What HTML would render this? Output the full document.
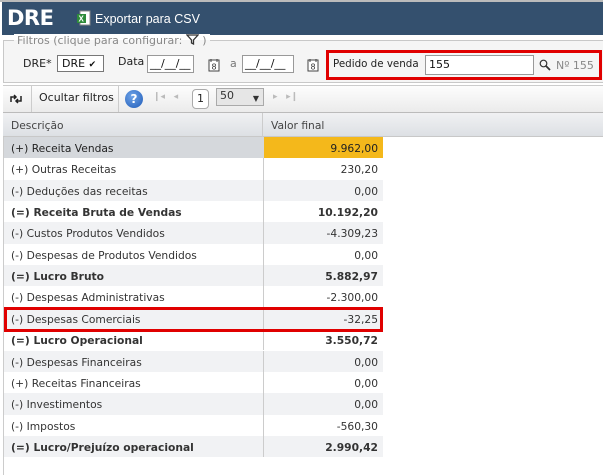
<!DOCTYPE html>
<html><head><meta charset="utf-8"><style>
*{box-sizing:border-box;margin:0;padding:0}
body{width:603px;height:475px;overflow:hidden;background:#fff;font-family:"DejaVu Sans","Liberation Sans",sans-serif;font-size:10.7px;color:#333;position:relative}
.abs{position:absolute}
#top{left:0;top:0;width:603px;height:2px;background:#bbb}
#hdr{left:2px;top:2px;width:601px;height:33px;background:#34506e;color:#fff}
#hdr .t{position:absolute;left:5px;top:4px;font:bold 21px "DejaVu Sans",sans-serif;letter-spacing:-0.5px}
#hdr .e{position:absolute;left:93px;top:10px;font-family:"Liberation Sans",sans-serif;font-size:12.5px}
#fs{left:3px;top:40px;width:600px;height:43px;border:1px solid #c8c8c8;border-right:none;background:#f5f5f5}
.lg{left:14px;top:34px;padding:0 3px;color:#888;font-size:11px;background:linear-gradient(#fff 6px,#f5f5f5 6px)}
.inp{border:1px solid #999;background:#fff;height:18px}
#tb{left:3px;top:85px;width:600px;height:28px;background:linear-gradient(#fdfdfd,#ebebeb);border-top:1px solid #ccc;border-bottom:1px solid #bbb}
#th{left:3px;top:113px;width:600px;height:24px;background:linear-gradient(#f0f1f3,#dde0e4);border-bottom:1px solid #c8c8c8;color:#444}
.row{position:absolute;left:4px;width:379px;height:21.35px;line-height:21px}
.row .d{position:absolute;left:7px;top:1px}
.row .v{position:absolute;right:5px;top:1px;text-align:right}
.row.g{background:#f1f2f4}
.row.b{font-weight:bold}
.row .sep{position:absolute;left:259px;top:0;width:1px;height:100%;background:#ccc}
.red{border:3px solid #e00000}
</style></head><body>
<div id="top" class="abs"></div>
<div id="hdr" class="abs"><span class="t">DRE</span>
<svg style="position:absolute;left:74px;top:8px" width="16" height="17"><rect x="4" y="1" width="10" height="14" fill="#fff" stroke="#888"/><rect x="1" y="4" width="9" height="9" fill="#2e8b3a"/><text x="2.5" y="11.5" font-size="8" fill="#fff" font-family="Liberation Sans" font-weight="bold">X</text></svg>
<span class="e">Exportar para CSV</span></div>
<div id="fs" class="abs"></div>
<div class="abs lg">Filtros (clique para configurar: <svg width="13" height="11" style="vertical-align:-1px"><path d="M1 1h11L7.5 6v4L5.5 9V6z" fill="none" stroke="#333" stroke-width="1.3"/></svg> )</div>
<div class="abs" style="left:23px;top:57px;font-size:11px;color:#222">DRE*</div>
<div class="abs inp" style="left:57px;top:55px;width:47px;height:17px;border-color:#777;font-size:11px;padding-left:4px;line-height:15px;color:#111">DRE <span style="font-size:9px">&#x2714;</span></div>
<div class="abs" style="left:118px;top:55px;font-size:11px;color:#222">Data</div>
<div class="abs inp" style="left:147px;top:55px;width:47px;color:#111;font-size:11px;padding-left:2px;line-height:16px">__/__/__</div>
<svg class="abs" style="left:208px;top:58px" width="12" height="14"><rect x="1" y="2" width="10" height="11" fill="#fff" stroke="#444"/><line x1="3" y1="1" x2="3" y2="4" stroke="#444"/><line x1="9" y1="1" x2="9" y2="4" stroke="#444"/><text x="3.5" y="11.5" font-size="8" fill="#333">8</text></svg>
<div class="abs" style="left:230px;top:57px;font-size:11px;color:#777">a</div>
<div class="abs inp" style="left:242px;top:55px;width:52px;color:#111;font-size:11px;padding-left:2px;line-height:16px">__/__/__</div>
<svg class="abs" style="left:307px;top:58px" width="12" height="14"><rect x="1" y="2" width="10" height="11" fill="#fff" stroke="#444"/><line x1="3" y1="1" x2="3" y2="4" stroke="#444"/><line x1="9" y1="1" x2="9" y2="4" stroke="#444"/><text x="3.5" y="11.5" font-size="8" fill="#333">8</text></svg>
<div class="abs red" style="left:326px;top:50px;width:276px;height:30px"></div>
<div class="abs" style="left:333px;top:58px;font-size:10.3px;color:#222">Pedido de venda</div>
<div class="abs inp" style="left:425px;top:55px;width:109px;height:20px;font-size:11px;color:#111;padding-left:3px;line-height:18px">155</div>
<svg class="abs" style="left:539px;top:59px" width="12" height="12"><circle cx="4.5" cy="4.5" r="3.3" fill="none" stroke="#333" stroke-width="1.2"/><line x1="7" y1="7" x2="11" y2="11" stroke="#333" stroke-width="1.8"/></svg>
<div class="abs" style="left:556px;top:59px;font-size:11px;color:#888">Nº 155</div>
<div id="tb" class="abs"></div>
<svg class="abs" style="left:9px;top:93px" width="14" height="12"><path d="M2 9V4h5M5 2l2 2-2 2M12 3v5H7M9 10l-2-2 2-2" fill="none" stroke="#222" stroke-width="1.5"/></svg>
<div class="abs" style="left:31px;top:86px;width:1px;height:26px;background:#ccc"></div>
<div class="abs" style="left:39px;top:91px;font-size:11px;color:#222">Ocultar filtros</div>
<div class="abs" style="left:118px;top:86px;width:1px;height:26px;background:#ccc"></div>
<div class="abs" style="left:125px;top:90px;width:18px;height:18px;border-radius:50%;background:radial-gradient(circle at 40% 35%,#6fa4e8,#1f5bb8);color:#fff;font:bold 12px 'DejaVu Sans';text-align:center;line-height:18px">?</div>
<div class="abs" style="left:153px;top:92px;color:#bbb;font-size:9px">&#x2759;&#x25C2;&nbsp;&nbsp;&nbsp;&#x25C2;</div>
<div class="abs" style="left:192px;top:89px;width:17px;height:20px;border:1px solid #aaa;border-radius:4px;background:#fff;font-size:11px;text-align:center;line-height:18px;color:#222">1</div>
<div class="abs" style="left:216px;top:88px;width:48px;height:18px;border:1px solid #aaa;background:#e6e6e6;font-size:11px;padding-left:3px;line-height:14px;color:#333">50<span style="position:absolute;right:4px;top:3px;font-size:8px">&#x25BC;</span></div>
<div class="abs" style="left:273px;top:92px;color:#bbb;font-size:9px">&#x25B8;&nbsp;&nbsp;&nbsp;&#x25B8;&#x2759;</div>
<div id="th" class="abs"><span style="position:absolute;left:8px;top:6px">Descrição</span><div style="position:absolute;left:259px;top:0;width:1px;height:24px;background:#ccc"></div><span style="position:absolute;left:268px;top:6px">Valor final</span></div>
<div class="abs" style="left:3px;top:137px;width:1px;height:338px;background:#ccc"></div>
<div class="row" style="top:137px;background:#d5d8dc;color:#222"><span class="d">(+) Receita Vendas</span><div style="position:absolute;left:260px;top:0;width:119px;height:100%;background:#f4b81b"></div><span class="v">9.962,00</span></div>
<div class="row" style="top:158.35px"><div class="sep"></div><span class="d">(+) Outras Receitas</span><span class="v">230,20</span></div>
<div class="row g" style="top:179.7px"><div class="sep"></div><span class="d">(-) Deduções das receitas</span><span class="v">0,00</span></div>
<div class="row b" style="top:201.05px"><div class="sep"></div><span class="d">(=) Receita Bruta de Vendas</span><span class="v">10.192,20</span></div>
<div class="row g" style="top:222.4px"><div class="sep"></div><span class="d">(-) Custos Produtos Vendidos</span><span class="v">-4.309,23</span></div>
<div class="row" style="top:243.75px"><div class="sep"></div><span class="d">(-) Despesas de Produtos Vendidos</span><span class="v">0,00</span></div>
<div class="row b g" style="top:265.1px"><div class="sep"></div><span class="d">(=) Lucro Bruto</span><span class="v">5.882,97</span></div>
<div class="row" style="top:286.45px"><div class="sep"></div><span class="d">(-) Despesas Administrativas</span><span class="v">-2.300,00</span></div>
<div class="row g" style="top:307.8px"><div class="sep"></div><span class="d">(-) Despesas Comerciais</span><span class="v">-32,25</span></div>
<div class="row b" style="top:329.15px"><div class="sep"></div><span class="d">(=) Lucro Operacional</span><span class="v">3.550,72</span></div>
<div class="row g" style="top:350.5px"><div class="sep"></div><span class="d">(-) Despesas Financeiras</span><span class="v">0,00</span></div>
<div class="row" style="top:371.85px"><div class="sep"></div><span class="d">(+) Receitas Financeiras</span><span class="v">0,00</span></div>
<div class="row g" style="top:393.2px"><div class="sep"></div><span class="d">(-) Investimentos</span><span class="v">0,00</span></div>
<div class="row" style="top:414.55px"><div class="sep"></div><span class="d">(-) Impostos</span><span class="v">-560,30</span></div>
<div class="row b g" style="top:435.9px"><div class="sep"></div><span class="d">(=) Lucro/Prejuízo operacional</span><span class="v">2.990,42</span></div>
<div class="abs red" style="left:4px;top:307px;width:379px;height:25px"></div>
</body></html>
